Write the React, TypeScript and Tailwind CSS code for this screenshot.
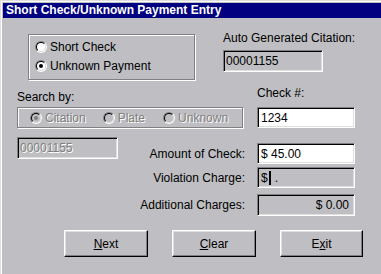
import React from "react";

const BG = "bg-[#bfbfc3]";

function Radio({ checked, disabled }: { checked?: boolean; disabled?: boolean }) {
  return (
    <span className="relative inline-block w-[12px] h-[12px] shrink-0 rounded-full border border-t-[#808080] border-l-[#808080] border-r-white border-b-white">
      <span
        className={`absolute inset-0 rounded-full border border-t-black border-l-black border-r-[#dfdfdf] border-b-[#dfdfdf] ${
          disabled ? "bg-[#bfbfc3]" : "bg-white"
        }`}
      />
      {checked && (
        <span
          className={`absolute left-[3px] top-[3px] w-[4px] h-[4px] rounded-full ${
            disabled ? "bg-[#808080]" : "bg-black"
          }`}
        />
      )}
    </span>
  );
}

const sunken =
  "border border-t-[#808080] border-l-[#808080] border-r-white border-b-white shadow-[inset_1px_1px_0_#000,inset_-1px_-1px_0_#dfdfdf]";
const etched = "border border-[#808080] shadow-[inset_1px_1px_0_#fff,1px_1px_0_#fff]";
const button =
  "flex items-center justify-center border border-t-white border-l-white border-r-black border-b-black shadow-[inset_-1px_-1px_0_#808080,inset_1px_1px_0_#dfdfdf]";
const disabledText = "text-[#808080] [text-shadow:1px_1px_0_#fff]";

export default function App() {
  return (
    <div
      className={`w-[381px] h-[274px] overflow-hidden ${BG} text-black text-[12px] leading-[14px] font-['Liberation_Sans',Arial,sans-serif] shadow-[inset_1px_1px_0_#dfdfdf,inset_2px_2px_0_#fff] pt-[3px] flex flex-col`}
    >
      {/* Title bar */}
      <div className="ml-[3px] h-[15px] bg-[#000080] text-white font-bold text-[12px] leading-[15px] pl-[3px] whitespace-nowrap">
        Short Check/Unknown Payment Entry
      </div>

      {/* Row A */}
      <div className="mt-[13px] flex items-start">
        <div className={`ml-[28px] mt-[3px] w-[167px] h-[46px] ${etched} pt-[6px] pl-[6px] flex flex-col gap-[7px]`}>
          <div className="flex items-center gap-[3px] h-[12px] whitespace-nowrap">
            <Radio />
            <span>Short Check</span>
          </div>
          <div className="flex items-center gap-[3px] h-[12px] whitespace-nowrap">
            <Radio checked />
            <span>Unknown Payment</span>
          </div>
        </div>
        <div className="ml-[28px] flex flex-col">
          <div className="whitespace-nowrap">Auto Generated Citation:</div>
          <div className={`mt-[5px] w-[100px] h-[22px] ${sunken} pl-[2px] flex items-center`}>00001155</div>
        </div>
      </div>

      {/* Row B */}
      <div className="mt-[6px] flex items-start">
        <div className="ml-[17px] mt-[4px] whitespace-nowrap">Search by:</div>
        <div className="ml-auto mr-[26px] w-[98px] whitespace-nowrap">Check #:</div>
      </div>

      {/* Row C */}
      <div className="mt-[3px] flex items-start">
        <div className={`ml-[17px] w-[226px] h-[21px] ${etched} pl-[12px] flex items-center whitespace-nowrap`}>
          <div className="flex items-center gap-[3px]">
            <Radio checked disabled />
            <span className={disabledText}>Citation</span>
          </div>
          <div className="ml-[17px] flex items-center gap-[3px]">
            <Radio disabled />
            <span className={disabledText}>Plate</span>
          </div>
          <div className="ml-[18px] flex items-center gap-[3px]">
            <Radio disabled />
            <span className={disabledText}>Unknown</span>
          </div>
        </div>
        <div className={`ml-auto mr-[26px] w-[98px] h-[21px] bg-white ${sunken} pl-[3px] flex items-center`}>1234</div>
      </div>

      {/* Row D */}
      <div className="mt-[9px] flex items-start">
        <div className={`ml-[17px] w-[101px] h-[22px] ${sunken} pl-[2px] flex items-center ${disabledText}`}>
          00001155
        </div>
        <div className="ml-auto mr-[26px] mt-[6px] flex flex-col items-end">
          <div className="flex items-center">
            <span className="whitespace-nowrap">Amount of Check:</span>
            <div className={`ml-[12px] w-[98px] h-[21px] bg-white ${sunken} pl-[3px] flex items-center`}>$ 45.00</div>
          </div>
          <div className="mt-[3px] flex items-center">
            <span className="whitespace-nowrap">Violation Charge:</span>
            <div className={`ml-[12px] w-[98px] h-[21px] ${sunken} pl-[3px] flex items-center`}>
              <span>$</span>
              <span className="ml-[1px] w-[2px] h-[14px] bg-black" />
              <span className="ml-[4px]">.</span>
            </div>
          </div>
          <div className="mt-[6px] flex items-center">
            <span className="whitespace-nowrap">Additional Charges:</span>
            <div className={`ml-[12px] w-[98px] h-[22px] ${sunken} pr-[5px] flex items-center justify-end`}>$ 0.00</div>
          </div>
        </div>
      </div>

      {/* Buttons */}
      <div className="mt-[14px] flex items-start">
        <div className={`ml-[64px] w-[84px] h-[27px] ${button}`}>
          <span>
            <span className="underline">N</span>ext
          </span>
        </div>
        <div className={`ml-[24px] w-[84px] h-[27px] ${button}`}>
          <span>
            <span className="underline">C</span>lear
          </span>
        </div>
        <div className={`ml-[24px] w-[83px] h-[27px] ${button}`}>
          <span>
            E<span className="underline">x</span>it
          </span>
        </div>
      </div>
    </div>
  );
}
